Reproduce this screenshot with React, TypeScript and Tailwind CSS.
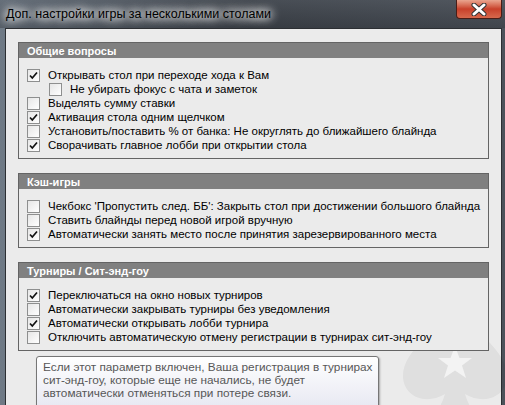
import React from 'react';

type Item = { label: string; checked: boolean; indent?: boolean };

const general: Item[] = [
  { label: 'Открывать стол при переходе хода к Вам', checked: true },
  { label: 'Не убирать фокус с чата и заметок', checked: false, indent: true },
  { label: 'Выделять сумму ставки', checked: false },
  { label: 'Активация стола одним щелчком', checked: true },
  { label: 'Установить/поставить % от банка: Не округлять до ближайшего блайнда', checked: false },
  { label: 'Сворачивать главное лобби при открытии стола', checked: true },
];

const cash: Item[] = [
  { label: "Чекбокс 'Пропустить след. ББ': Закрыть стол при достижении большого блайнда", checked: false },
  { label: 'Ставить блайнды перед новой игрой вручную', checked: false },
  { label: 'Автоматически занять место после принятия зарезервированного места', checked: true },
];

const tourneys: Item[] = [
  { label: 'Переключаться на окно новых турниров', checked: true },
  { label: 'Автоматически закрывать турниры без уведомления', checked: false },
  { label: 'Автоматически открывать лобби турнира', checked: true },
  { label: 'Отключить автоматическую отмену регистрации в турнирах сит-энд-гоу', checked: false },
];

const Checkbox: React.FC<{ checked: boolean }> = ({ checked }) => (
  <span className="w-[13px] h-[13px] shrink-0 border border-[#8e8f8f] bg-gradient-to-br from-[#e6e6e6] to-white flex items-center justify-center">
    {checked && (
      <svg width="11" height="11" viewBox="0 0 11 11">
        <polyline points="2,5.5 4.3,8 9,2.5" fill="none" stroke="#111" strokeWidth="1.7" />
      </svg>
    )}
  </span>
);

const GroupBox: React.FC<{ title: string; items: Item[]; className?: string }> = ({ title, items, className }) => (
  <div className={`border border-[#646464] bg-[#ebebeb] relative z-10 ${className ?? ''}`}>
    <div className="h-[15px] bg-[#808080] pl-[8px] flex items-center text-white font-bold text-[11px] leading-[14px]">
      {title}
    </div>
    <div className="pt-[10px] pb-[6px] pl-[8px]">
      {items.map(it => (
        <div key={it.label} className={`h-[14px] flex items-center gap-[8px] ${it.indent ? 'pl-[22px]' : ''}`}>
          <Checkbox checked={it.checked} />
          <span className="text-[11.5px] leading-[14px] text-black whitespace-nowrap">{it.label}</span>
        </div>
      ))}
    </div>
  </div>
);

export default function App() {
  return (
    <div className="w-[505px] h-[405px] overflow-hidden relative bg-gradient-to-r from-[#6f7a86] via-[#3b4047] to-[#4c525a] [font-family:'Liberation_Sans',Arial,sans-serif]">
      {/* title bar */}
      <div className="h-[28px] flex items-center pl-[6px] bg-gradient-to-b from-[#5a6068]/40 to-[#2e3238]/40">
        <span className="text-[12.5px] text-black [text-shadow:0_0_8px_#fff,0_0_10px_#fff,0_0_12px_#ddd]">
          Доп. настройки игры за несколькими столами
        </span>
      </div>
      <div className="absolute top-0 right-[3px] w-[46px] h-[19px] rounded-b-[4px] border border-t-0 border-[#4a1d16] bg-gradient-to-b from-[#e9a58f] via-[#c8402a] to-[#d7684c] flex items-center justify-center">
        <svg width="16" height="13" viewBox="0 0 16 13">
          <path d="M3 2 L13 11 M13 2 L3 11" stroke="#333" strokeWidth="5" strokeLinecap="round" />
          <path d="M3 2 L13 11 M13 2 L3 11" stroke="#fff" strokeWidth="3" strokeLinecap="round" />
        </svg>
      </div>

      {/* client area */}
      <div className="absolute top-[28px] left-[5px] right-[3px] bottom-0 border border-b-0 border-[#2c2f33] bg-[#ebebeb] px-[12px] pt-[13px]">
        <svg className="absolute left-[389px] top-[275px]" width="120" height="125" viewBox="0 0 120 125">
          <path
            d="M60 2 C45 25 8 45 8 72 C8 92 30 102 50 90 C46 104 38 114 26 122 L94 122 C82 114 74 104 70 90 C90 102 112 92 112 72 C112 45 75 25 60 2 Z"
            fill="#000"
            opacity="0.05"
          />
          <path
            d="M60 42 L64.5 54 L77 54 L67 61.5 L71 74 L60 66.5 L49 74 L53 61.5 L43 54 L55.5 54 Z"
            fill="#f3f3f3"
          />
        </svg>
        <GroupBox title="Общие вопросы" items={general} />
        <GroupBox title="Кэш-игры" items={cash} className="mt-[14px]" />
        <GroupBox title="Турниры / Сит-энд-гоу" items={tourneys} className="mt-[14px]" />
      </div>

      {/* tooltip */}
      <div className="absolute left-[36px] top-[356px] w-[343px] h-[60px] z-20 rounded-[3px] border border-[#767676] bg-gradient-to-b from-white to-[#e4e5f0] pl-[6px] pt-[4px] text-[11.8px] leading-[13px] text-[#575757] whitespace-nowrap shadow-[1px_1px_2px_rgba(0,0,0,0.3)]">
        <div>Если этот параметр включен, Ваша регистрация в турнирах</div>
        <div>сит-энд-гоу, которые еще не начались, не будет</div>
        <div>автоматически отменяться при потере связи.</div>
      </div>
    </div>
  );
}
